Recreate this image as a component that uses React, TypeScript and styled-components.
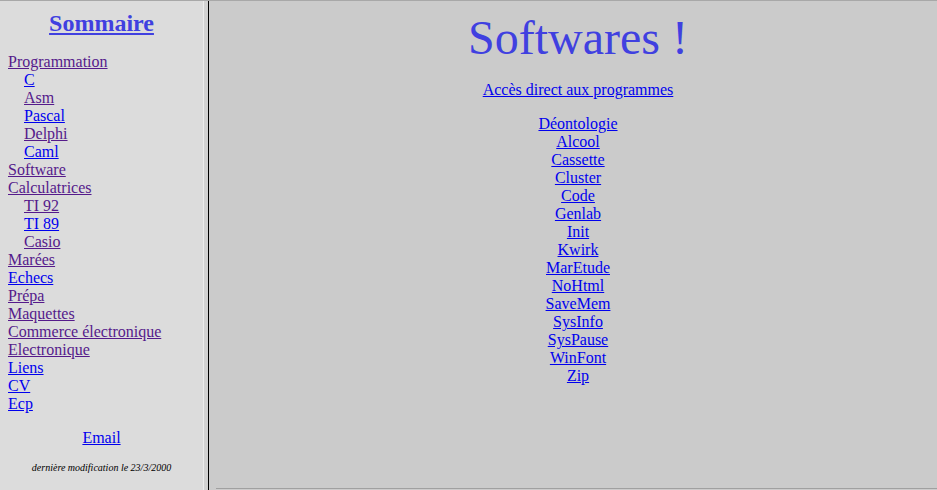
import React from 'react';
import styled, { createGlobalStyle } from 'styled-components';

const GlobalStyle = createGlobalStyle`
  html, body {
    margin: 0;
    padding: 0;
    height: 100%;
    overflow: hidden;
  }
  body {
    font-family: 'Liberation Serif', 'Times New Roman', serif;
    font-size: 16px;
  }
  #root {
    height: 100%;
  }
`;

type MenuItem = { label: string; visited?: boolean; sub?: boolean };

const menu: MenuItem[] = [
  { label: 'Programmation', visited: true },
  { label: 'C', sub: true },
  { label: 'Asm', sub: true, visited: true },
  { label: 'Pascal', sub: true },
  { label: 'Delphi', sub: true, visited: true },
  { label: 'Caml', sub: true },
  { label: 'Software', visited: true },
  { label: 'Calculatrices', visited: true },
  { label: 'TI 92', sub: true, visited: true },
  { label: 'TI 89', sub: true },
  { label: 'Casio', sub: true, visited: true },
  { label: 'Marées', visited: true },
  { label: 'Echecs' },
  { label: 'Prépa', visited: true },
  { label: 'Maquettes', visited: true },
  { label: 'Commerce électronique', visited: true },
  { label: 'Electronique', visited: true },
  { label: 'Liens' },
  { label: 'CV' },
  { label: 'Ecp' },
];

const programs = [
  'Déontologie',
  'Alcool',
  'Cassette',
  'Cluster',
  'Code',
  'Genlab',
  'Init',
  'Kwirk',
  'MarEtude',
  'NoHtml',
  'SaveMem',
  'SysInfo',
  'SysPause',
  'WinFont',
  'Zip',
];

const App = () => {
  return (
    <>
      <GlobalStyle />
      <FrameSet>
        <MenuFrame>
          <MenuTitle href="#">Sommaire</MenuTitle>
          <MenuList>
            {menu.map((item) => (
              <MenuRow key={item.label} sub={item.sub}>
                <Link href="#" visited={item.visited}>
                  {item.label}
                </Link>
              </MenuRow>
            ))}
          </MenuList>
          <EmailRow>
            <Link href="#">Email</Link>
          </EmailRow>
          <LastModified>dernière modification le 23/3/2000</LastModified>
        </MenuFrame>
        <Divider />
        <MainFrame>
          <MainContent>
            <PageTitle>Softwares !</PageTitle>
            <DirectAccess>
              <Link href="#">Accès direct aux programmes</Link>
            </DirectAccess>
            <ProgramList>
              {programs.map((p) => (
                <ProgramRow key={p}>
                  <Link href="#">{p}</Link>
                </ProgramRow>
              ))}
            </ProgramList>
          </MainContent>
          <BottomEdge />
        </MainFrame>
      </FrameSet>
    </>
  );
};

const FrameSet = styled.div`
  display: flex;
  height: 100%;
  border-top: 1px solid #a8a8a8;
  box-sizing: border-box;
`;

const MenuFrame = styled.div`
  width: 203px;
  flex-shrink: 0;
  background: #dcdcdc;
  padding: 9px 0 0 8px;
  box-sizing: border-box;
  display: flex;
  flex-direction: column;
`;

const MenuTitle = styled.a`
  align-self: center;
  margin-left: -8px;
  color: #4040e0;
  font-size: 24px;
  font-weight: bold;
  line-height: 27px;
  text-decoration: underline;
`;

const MenuList = styled.div`
  margin-top: 16px;
`;

const MenuRow = styled.div<{ sub?: boolean }>`
  line-height: 18px;
  padding-left: ${({ sub }) => (sub ? '16px' : '0')};
  white-space: nowrap;
`;

const Link = styled.a<{ visited?: boolean }>`
  color: ${({ visited }) => (visited ? '#551a8b' : '#0000ee')};
  text-decoration: underline;
`;

const EmailRow = styled.div`
  margin-top: 16px;
  margin-left: -8px;
  text-align: center;
  line-height: 18px;
`;

const LastModified = styled.div`
  margin-top: 15px;
  margin-left: -8px;
  text-align: center;
  font-size: 10px;
  font-style: italic;
  line-height: 12px;
  color: #000;
`;

const Divider = styled.div`
  width: 6px;
  flex-shrink: 0;
  box-sizing: border-box;
  background: #d2d2d2;
  border-left: 1px solid #ececec;
  border-right: 1px solid #000;
`;

const MainFrame = styled.div`
  flex: 1;
  background: #cbcbcb;
  display: flex;
  flex-direction: column;
`;

const MainContent = styled.div`
  flex: 1;
  padding: 10px 8px 0 18px;
  text-align: center;
`;

const PageTitle = styled.h1`
  margin: 0;
  font-size: 48px;
  font-weight: normal;
  line-height: 53px;
  color: #4040e0;
`;

const DirectAccess = styled.div`
  margin-top: 17px;
  line-height: 18px;
`;

const ProgramList = styled.div`
  margin-top: 16px;
`;

const ProgramRow = styled.div`
  line-height: 18px;
`;

const BottomEdge = styled.div`
  height: 1px;
  margin-left: 7px;
  border-top: 1px solid #a0a0a0;
`;

export default App;
